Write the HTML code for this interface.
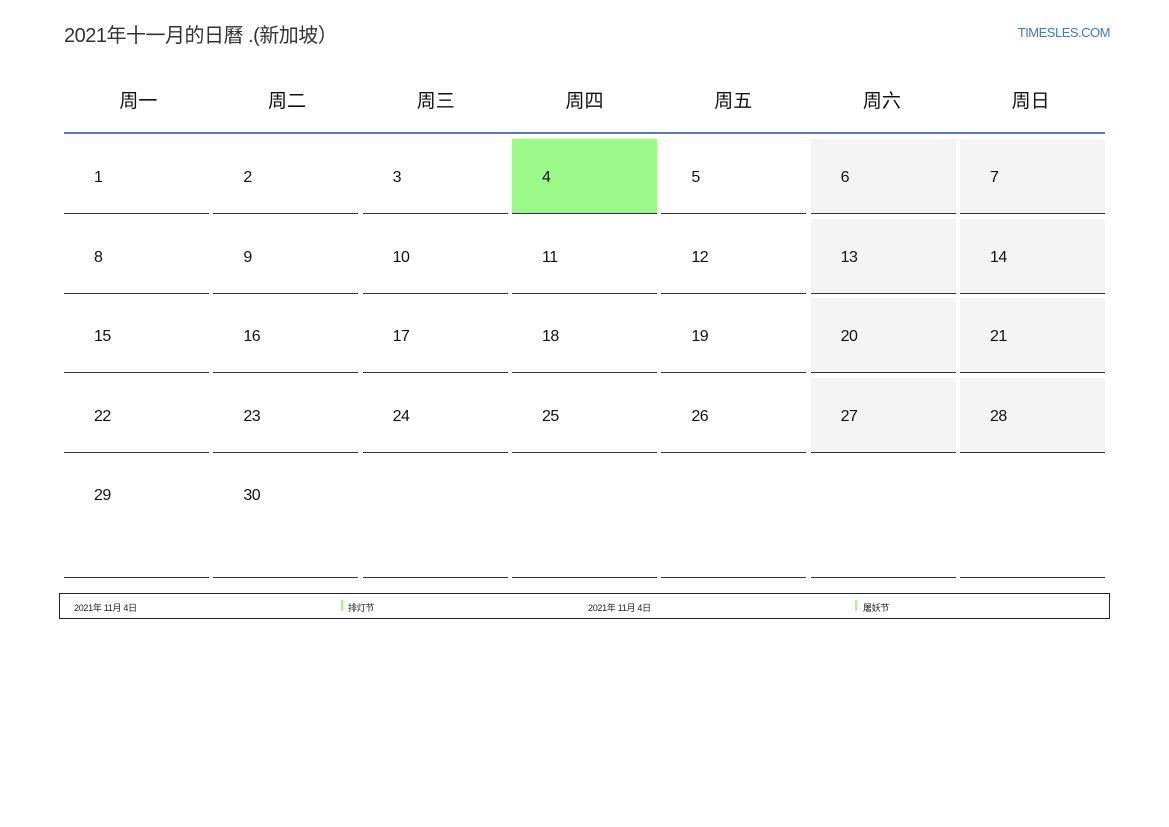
<!DOCTYPE html>
<html><head><meta charset="utf-8"><style>
body{margin:0;width:1169px;height:827px;background:#fff;font-family:"Liberation Sans","Noto Sans CJK SC",sans-serif;position:relative;overflow:hidden}
.t{position:absolute;left:64px;top:19px;font-size:20px;color:#333;letter-spacing:-0.5px}
.site{position:absolute;right:59px;top:25px;font-size:13px;color:#3a7bc8;letter-spacing:-0.5px}
.hd{position:absolute;left:64px;top:86px;width:1041px;display:grid;grid-template-columns:repeat(7,1fr);font-size:19px;color:#111;text-align:center}
.line{position:absolute;left:64px;top:132px;width:1041px;height:2px;background:#5a7aa8}
.g{position:absolute;left:64px;top:139px;width:1041px;display:grid;grid-template-columns:repeat(7,145px);column-gap:4.33px;row-gap:4.5px;grid-template-rows:75px 75px 75px 75px 121px}
.c{border-bottom:1px solid #333;font-size:16px;color:#111;padding:30px 0 0 30px;box-sizing:border-box;letter-spacing:-0.5px}
.w{background:#f4f4f4}.h{background:#9cfa88}
.ft{position:absolute;left:59px;top:593px;width:1049px;height:24px;border:1px solid #222;font-size:9px;color:#222;letter-spacing:-0.3px}
.ft span{position:absolute;top:7px}
.bar{position:absolute;top:6px;width:2px;height:11px;background:#9cfa88}
</style></head><body>
<div class="t">2021年十一月的日曆 .(新加坡）</div>
<div class="site">TIMESLES.COM</div>
<div class="hd"><div>周一</div><div>周二</div><div>周三</div><div>周四</div><div>周五</div><div>周六</div><div>周日</div></div>
<div class="line"></div>
<div class="g">
<div class="c">1</div><div class="c">2</div><div class="c">3</div><div class="c h">4</div><div class="c">5</div><div class="c w">6</div><div class="c w">7</div>
<div class="c">8</div><div class="c">9</div><div class="c">10</div><div class="c">11</div><div class="c">12</div><div class="c w">13</div><div class="c w">14</div>
<div class="c">15</div><div class="c">16</div><div class="c">17</div><div class="c">18</div><div class="c">19</div><div class="c w">20</div><div class="c w">21</div>
<div class="c">22</div><div class="c">23</div><div class="c">24</div><div class="c">25</div><div class="c">26</div><div class="c w">27</div><div class="c w">28</div>
<div class="c">29</div><div class="c">30</div><div class="c"></div><div class="c"></div><div class="c"></div><div class="c"></div><div class="c"></div>
</div>
<div class="ft">
<span style="left:14px">2021年 11月 4日</span>
<div class="bar" style="left:281px"></div><span style="left:288px">排灯节</span>
<span style="left:528px">2021年 11月 4日</span>
<div class="bar" style="left:795px"></div><span style="left:803px">屠妖节</span>
</div>
</body></html>
